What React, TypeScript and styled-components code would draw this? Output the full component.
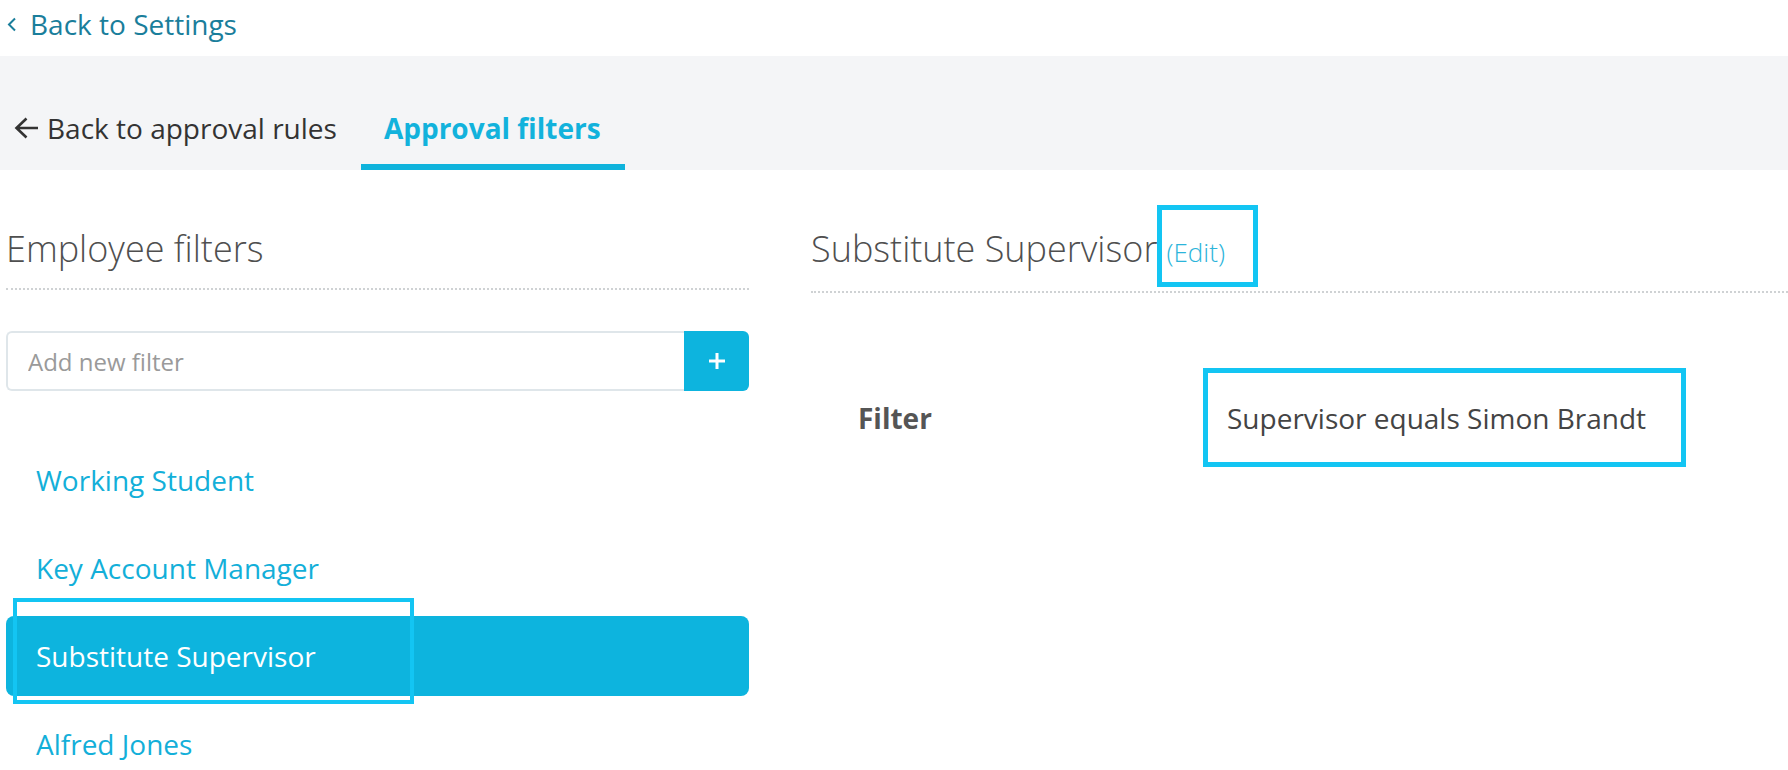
import React from 'react';
import styled, { createGlobalStyle } from 'styled-components';

const GlobalStyle = createGlobalStyle`
  body {
    margin: 0;
    background: #ffffff;
    font-family: "Open Sans", "Liberation Sans", sans-serif;
  }
`

const Page = styled.div`
  width: 1788px;
  min-height: 770px;
  overflow: hidden;
`
const TopLink = styled.a`
  display: flex;
  align-items: center;
  gap: 13px;
  height: 48px;
  padding: 0 0 8px 7px;
  color: #1a7e9b;
  font-size: 28px;
  text-decoration: none;
`
const TabBar = styled.div`
  display: flex;
  align-items: flex-end;
  height: 114px;
  background: #f4f5f7;
`
const Tab = styled.div<{ $active?: boolean }>`
  display: flex;
  align-items: center;
  gap: 8px;
  height: 60px;
  padding: 0 ${p => (p.$active ? '24px' : '0')} 6px ${p => (p.$active ? '23px' : '14px')};
  margin-right: ${p => (p.$active ? '0' : '24px')};
  border-bottom: 6px solid ${p => (p.$active ? '#0fb3dc' : 'transparent')};
  font-size: 28px;
  font-weight: ${p => (p.$active ? 700 : 400)};
  color: ${p => (p.$active ? '#12b2dc' : '#333333')};
`
const Main = styled.div`
  display: flex;
  padding-left: 6px;
`
const LeftCol = styled.div`
  width: 743px;
  flex-shrink: 0;
`
const RightCol = styled.div`
  flex: 1;
  margin-left: 62px;
`
const SectionHeader = styled.div`
  padding: 59px 0 19px;
  line-height: 40px;
  font-size: 36px;
  font-weight: 300;
  color: #4f4f4f;
  border-bottom: 2px dotted #cfd2d4;
  white-space: nowrap;
`
const EditLink = styled.span`
  position: relative;
  display: inline-block;
  margin-left: 9px;
  font-size: 26px;
  color: #2bb4da;
`
const Annotation = styled.span<{ $t: number; $r: number; $b: number; $l: number; $w?: number }>`
  position: absolute;
  top: ${p => p.$t}px;
  right: ${p => p.$r}px;
  bottom: ${p => p.$b}px;
  left: ${p => p.$l}px;
  border: ${p => p.$w ?? 5}px solid #13c5f3;
  pointer-events: none;
`
const AddRow = styled.div`
  display: flex;
  height: 60px;
  margin-top: 41px;
`
const AddInput = styled.input`
  flex: 1;
  min-width: 0;
  box-sizing: border-box;
  height: 60px;
  padding: 0 0 0 20px;
  border: 2px solid #dfe6ea;
  border-right: none;
  border-radius: 6px 0 0 6px;
  font-family: inherit;
  font-size: 24px;
  color: #333;
  outline: none;
  &::placeholder {
    color: #9a9a9a;
  }
`
const AddButton = styled.button`
  display: flex;
  align-items: center;
  justify-content: center;
  width: 65px;
  height: 60px;
  border: none;
  border-radius: 0 6px 6px 0;
  background: #0db4de;
  padding: 0;
`
const List = styled.div`
  display: flex;
  flex-direction: column;
  gap: 8px;
  margin-top: 49px;
`
const Item = styled.div<{ $selected?: boolean }>`
  position: relative;
  height: 80px;
  line-height: 80px;
  padding-left: 30px;
  border-radius: 8px;
  font-size: 28px;
  color: ${p => (p.$selected ? '#ffffff' : '#13afd9')};
  background: ${p => (p.$selected ? '#0db4de' : 'transparent')};
`
const FilterRow = styled.div`
  display: flex;
  align-items: center;
  height: 99px;
  margin-top: 75px;
  padding-left: 47px;
`
const FilterLabel = styled.div`
  width: 345px;
  font-size: 28px;
  font-weight: 700;
  color: #555555;
`
const FilterValue = styled.div`
  position: relative;
  display: flex;
  align-items: center;
  box-sizing: border-box;
  width: 483px;
  height: 99px;
  padding-left: 24px;
  font-size: 28px;
  color: #444444;
`

const items = ['Working Student', 'Key Account Manager', 'Substitute Supervisor', 'Alfred Jones']

const App: React.FC = () => {
  return (
    <>
      <GlobalStyle />
      <Page>
        <TopLink href="#">
          <svg width="10" height="15" viewBox="0 0 10 15">
            <path d="M8 1.5 L2 7.5 L8 13.5" fill="none" stroke="#1a7e9b" strokeWidth="2" />
          </svg>
          Back to Settings
        </TopLink>
        <TabBar>
          <Tab>
            <svg width="25" height="22" viewBox="0 0 25 22">
              <path d="M24 11H2.5 M12.5 1.5 L2.5 11 L12.5 20.5" fill="none" stroke="#333" strokeWidth="2.6" />
            </svg>
            Back to approval rules
          </Tab>
          <Tab $active>Approval filters</Tab>
        </TabBar>
        <Main>
          <LeftCol>
            <SectionHeader>Employee filters</SectionHeader>
            <AddRow>
              <AddInput placeholder="Add new filter" />
              <AddButton>
                <svg width="18" height="18" viewBox="0 0 18 18">
                  <path d="M9 1V17 M1 9H17" stroke="#fff" strokeWidth="3" />
                </svg>
              </AddButton>
            </AddRow>
            <List>
              {items.map(name => (
                <Item key={name} $selected={name === 'Substitute Supervisor'}>
                  {name}
                  {name === 'Substitute Supervisor' && <Annotation $t={-18} $r={335} $b={-8} $l={7} $w={4} />}
                </Item>
              ))}
            </List>
          </LeftCol>
          <RightCol>
            <SectionHeader>
              Substitute Supervisor
              <EditLink>
                (Edit)
                <Annotation $t={-27} $r={-33} $b={-15} $l={-9} />
              </EditLink>
            </SectionHeader>
            <FilterRow>
              <FilterLabel>Filter</FilterLabel>
              <FilterValue>
                Supervisor equals Simon Brandt
                <Annotation $t={0} $r={0} $b={0} $l={0} />
              </FilterValue>
            </FilterRow>
          </RightCol>
        </Main>
      </Page>
    </>
  )
}

export default App
